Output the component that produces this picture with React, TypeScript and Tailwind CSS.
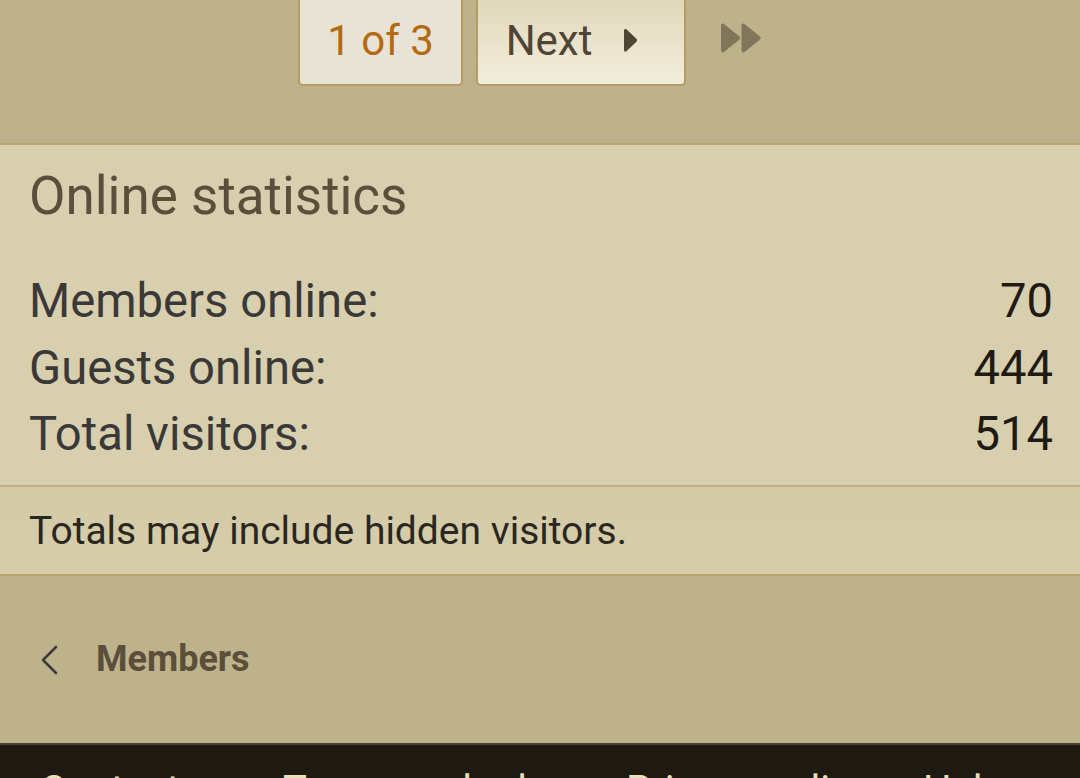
import React from "react";

function FastForward() {
  return (
    <svg width="44" height="32" viewBox="0 0 44 32" fill="#80765a">
      <path d="M2 3.5c0-1.6 1.8-2.5 3-1.5l15.5 12.5c1 .8 1 2.2 0 3L5 30c-1.2 1-3 .1-3-1.5z" />
      <path d="M22.5 3.5c0-1.6 1.8-2.5 3-1.5L41 14.5c1 .8 1 2.2 0 3L25.5 30c-1.2 1-3 .1-3-1.5z" />
    </svg>
  );
}

const rows = [
  { label: "Members online:", value: "70" },
  { label: "Guests online:", value: "444" },
  { label: "Total visitors:", value: "514" },
];

export default function App() {
  return (
    <div
      className="w-[1080px] h-[778px] overflow-hidden bg-[#bdb28a]"
      style={{ fontFamily: "Roboto, 'Noto Sans', sans-serif" }}
    >
      {/* pagination */}
      <div className="h-[143px] flex items-start justify-center pl-[298px] pr-[317px] gap-[13px] overflow-hidden">
        <div className="-mt-[20px] h-[106px] w-[166px] rounded-b-[5px] border-2 border-[#b59c62] bg-[#e9e3d7] flex items-end justify-center pb-[22px]">
          <span className="text-[42px] leading-none text-[#b36b12]">1 of 3</span>
        </div>
        <div className="-mt-[20px] h-[106px] w-[211px] rounded-b-[5px] border-2 border-[#b59c62] bg-gradient-to-b from-[#ddd4b3] to-[#f3eddd] flex items-end justify-center gap-[30px] pb-[22px] pr-[18px]">
          <span className="text-[42px] leading-none text-[#4f4435]">Next</span>
          <svg width="16" height="26" viewBox="0 0 16 26" fill="#4f4435" className="mb-[8px]">
            <path d="M2 2.5c0-1.3 1.4-2 2.4-1.2l10 9.5c.9.8.9 2.2 0 3l-10 9.5C3.4 24.1 2 23.4 2 22z" />
          </svg>
        </div>
        <div className="mt-[22px] ml-[20px]">
          <FastForward />
        </div>
      </div>

      {/* online statistics */}
      <div className="border-t-2 border-b-2 border-[#b9a370] bg-[#d7cfae]">
        <div className="px-[29px] pt-[21px] pb-[17px]">
          <h2 className="text-[53px] leading-[61px] font-normal text-[#5b4e3b]">Online statistics</h2>
          <dl className="mt-[41px] flex flex-col">
            {rows.map((r) => (
              <div key={r.label} className="flex justify-between items-baseline h-[66.5px] leading-[66px] text-[47.2px]">
                <dt className="text-[#3a3937]">{r.label}</dt>
                <dd className="text-[#1f1b14] -mr-[2px]">{r.value}</dd>
              </div>
            ))}
          </dl>
        </div>
        <div className="border-t-2 border-[#c2ad7c] bg-gradient-to-b from-[#d4caa6] to-[#d6cdab] h-[89px] px-[29px] flex items-center">
          <p className="text-[39px] text-[#2a2721] pt-[2px]">Totals may include hidden visitors.</p>
        </div>
      </div>

      {/* breadcrumb */}
      <div className="h-[167px] flex items-center px-[38px] gap-[36px]">
        <svg width="22" height="32" viewBox="0 0 22 32" fill="none" stroke="#3c3b40" strokeWidth="2.6" strokeLinecap="round" strokeLinejoin="round" className="mt-[2px]">
          <path d="M18 3L5 16l13 13" />
        </svg>
        <span className="text-[36px] font-bold text-[#5b4e3b]">Members</span>
      </div>

      {/* footer */}
      <div className="border-t-2 border-[#4a4330] bg-[#1f1a11] h-[40px] px-[40px] flex text-[40px] text-[#eadfb8] leading-none pt-[26px]">
        <span className="w-[243px] shrink-0">Contact us</span>
        <span className="w-[343px] shrink-0">Terms and rules</span>
        <span className="w-[297px] shrink-0">Privacy policy</span>
        <span>Help</span>
      </div>
    </div>
  );
}
